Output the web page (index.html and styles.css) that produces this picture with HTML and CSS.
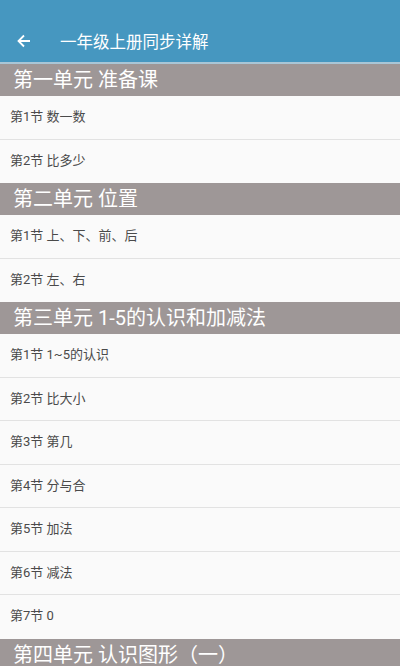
FILE: index.html
```html
<!DOCTYPE html>
<html lang="zh">
<head>
<meta charset="utf-8">
<link rel="stylesheet" href="styles.css">
</head>
<body>
<div class="app">
  <header class="topbar">
    <svg class="back" width="16" height="16" viewBox="0 0 16 16"><path d="M14 8H2.5M8 2.5L2.5 8 8 13.5" fill="none" stroke="#fff" stroke-width="1.8"/></svg>
    <span class="title">一年级上册同步详解</span>
  </header>
  <div class="list">
    <div class="unit">第一单元 准备课</div>
    <div class="row">第1节 数一数</div>
    <div class="row">第2节 比多少</div>
    <div class="unit">第二单元 位置</div>
    <div class="row">第1节 上、下、前、后</div>
    <div class="row">第2节 左、右</div>
    <div class="unit">第三单元 1-5的认识和加减法</div>
    <div class="row">第1节 1~5的认识</div>
    <div class="row">第2节 比大小</div>
    <div class="row">第3节 第几</div>
    <div class="row">第4节 分与合</div>
    <div class="row">第5节 加法</div>
    <div class="row">第6节 减法</div>
    <div class="row">第7节 0</div>
    <div class="unit">第四单元 认识图形（一）</div>
  </div>
</div>
</body>
</html>
```
FILE: styles.css
```css
html, body { margin: 0; padding: 0; }
body {
  width: 400px;
  height: 666px;
  overflow: hidden;
  background: #fafafa;
  font-family: Roboto, "Noto Sans CJK SC", sans-serif;
}
.topbar {
  height: 64px;
  box-sizing: border-box;
  padding-top: 20px;
  background: #4697c0;
  border-bottom: 2px solid #a9c6d6;
  display: flex;
  align-items: center;
}
.back { margin-left: 16px; width: 16px; height: 16px; }
.title {
  margin-left: 28px;
  color: #fff;
  font-size: 16.5px;
}
.unit {
  height: 32px;
  box-sizing: border-box;
  background: #9e9797;
  color: #fff;
  font-size: 20px;
  line-height: 32px;
  padding-left: 13px;
}
.row {
  height: 43.5px;
  box-sizing: border-box;
  border-bottom: 1px solid #e2e2e2;
  color: #4a4a4a;
  font-size: 13px;
  line-height: 42.5px;
  padding-left: 10px;
}
.row:has(+ .unit) { border-bottom: none; }
```
